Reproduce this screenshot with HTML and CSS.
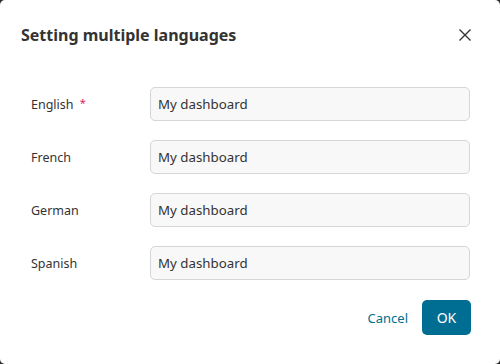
FILE: index.html
```html
<!DOCTYPE html>
<html>
<head>
<meta charset="utf-8">
<link rel="stylesheet" href="styles.css">
</head>
<body>
<div class="dialog">
  <div class="header">
    <h1 class="title">Setting multiple languages</h1>
    <button class="close" aria-label="Close">
      <svg width="12" height="12" viewBox="0 0 12 12"><path d="M0.5 0.5 L11.5 11.5 M11.5 0.5 L0.5 11.5" stroke="#333" stroke-width="1.4" fill="none"/></svg>
    </button>
  </div>
  <div class="form">
    <div class="row">
      <label class="label">English <span class="req">*</span></label>
      <input class="input" type="text" value="My dashboard">
    </div>
    <div class="row">
      <label class="label">French</label>
      <input class="input" type="text" value="My dashboard">
    </div>
    <div class="row">
      <label class="label">German</label>
      <input class="input" type="text" value="My dashboard">
    </div>
    <div class="row">
      <label class="label">Spanish</label>
      <input class="input" type="text" value="My dashboard">
    </div>
  </div>
  <div class="footer">
    <button class="btn-link">Cancel</button>
    <button class="btn-primary">OK</button>
  </div>
</div>
</body>
</html>
```
FILE: styles.css
```css
html, body {
  margin: 0;
  padding: 0;
  background: #2b2b2b;
}
body {
  font-family: "Noto Sans", "Open Sans", sans-serif;
  color: #333;
}
.dialog {
  width: 500px;
  height: 364px;
  background: #fff;
  border-radius: 5px;
  box-sizing: border-box;
  display: flex;
  flex-direction: column;
}
.header {
  display: flex;
  align-items: center;
  justify-content: space-between;
  padding: 22px 29px 0 21px;
  height: 26px;
}
.title {
  margin: 0;
  font-size: 16px;
  font-weight: 700;
  color: #333;
  line-height: 26px;
}
.close {
  border: 0;
  background: none;
  padding: 0;
  width: 12px;
  height: 12px;
  display: flex;
  cursor: pointer;
}
.form {
  display: flex;
  flex-direction: column;
  gap: 19px;
  padding: 39px 30px 0 31px;
}
.row {
  display: flex;
  align-items: center;
}
.label {
  width: 119px;
  font-size: 12.5px;
  color: #333;
}
.req {
  color: #e0245e;
  font-size: 11px;
  vertical-align: 2px;
  margin-left: 3px;
}
.input {
  flex: 1;
  height: 34px;
  box-sizing: border-box;
  border: 1px solid #d6d6d6;
  border-radius: 5px;
  background: #f8f8f8;
  padding: 0 7px;
  font-family: inherit;
  font-size: 13.3px;
  color: #333;
  outline: none;
}
.footer {
  display: flex;
  justify-content: flex-end;
  align-items: center;
  gap: 14px;
  padding: 20px 29px 0 0;
}
.btn-link {
  border: 0;
  background: none;
  font-family: inherit;
  font-size: 13px;
  color: #00708f;
  padding: 0;
  cursor: pointer;
}
.btn-primary {
  border: 0;
  background: #006e93;
  color: #fff;
  font-family: inherit;
  font-size: 14px;
  height: 35px;
  width: 49px;
  border-radius: 5px;
  cursor: pointer;
}
```
